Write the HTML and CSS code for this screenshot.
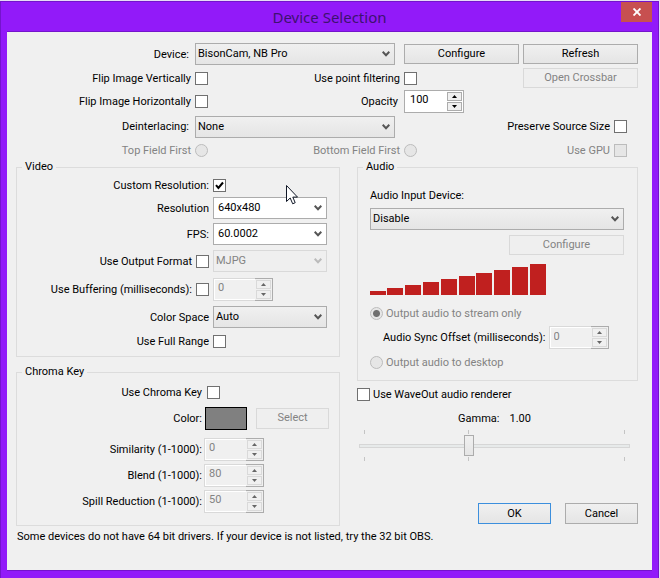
FILE: index.html
```
<!DOCTYPE html>
<html lang="en">
<head>
  <meta charset="UTF-8">
  <meta name="viewport" content="width=device-width, initial-scale=1.0">
  <title>Device Selection</title>
  <link rel="stylesheet" href="styles.css">
</head>
<body>
  <div class="window">
    <header class="titlebar">
      <h1>Device Selection</h1>
      <button class="close" aria-label="Close">
        <svg width="8" height="8" viewBox="0 0 8 8"><path d="M0.5 0.5L7.5 7.5M7.5 0.5L0.5 7.5" stroke="#fff" stroke-width="1.9"/></svg>
      </button>
    </header>

    <form class="dialog">
      <div class="device">
        <label class="colon" for="device">Device:</label>
        <select id="device"><option>BisonCam, NB Pro</option></select>
        <button type="button">Configure</button>
        <button type="button">Refresh</button>

        <label for="flipV">Flip Image Vertically</label>
        <div class="pair">
          <input type="checkbox" id="flipV">
          <label for="pointFilter">Use point filtering</label>
        </div>
        <input type="checkbox" id="pointFilter">
        <button type="button" disabled>Open Crossbar</button>

        <label for="flipH">Flip Image Horizontally</label>
        <div class="pair">
          <input type="checkbox" id="flipH">
          <label class="colon" for="opacity">Opacity</label>
        </div>
        <div class="spinner">
          <input type="text" id="opacity" value="100">
          <div class="arrows">
            <button type="button" class="up" aria-label="Increase opacity"></button>
            <button type="button" class="down" aria-label="Decrease opacity"></button>
          </div>
        </div>
        <span></span>

        <label class="colon" for="deinterlacing">Deinterlacing:</label>
        <select id="deinterlacing"><option>None</option></select>
        <div class="trailing">
          <label for="preserve">Preserve Source Size</label>
          <input type="checkbox" id="preserve">
        </div>

        <label class="off" for="topField">Top Field First</label>
        <div class="pair">
          <input type="radio" name="field" id="topField" disabled>
          <label class="off" for="bottomField">Bottom Field First</label>
        </div>
        <input type="radio" name="field" id="bottomField" disabled>
        <div class="trailing narrow">
          <label class="off" for="gpu">Use GPU</label>
          <input type="checkbox" id="gpu" disabled>
        </div>
      </div>

      <div class="columns">
        <div class="left">
          <fieldset class="video">
            <legend>Video</legend>
            <div class="row short">
              <label for="customRes">Custom Resolution:</label>
              <input type="checkbox" id="customRes" checked>
            </div>
            <div class="row">
              <label for="resolution">Resolution</label>
              <select class="combo" id="resolution"><option>640x480</option></select>
            </div>
            <div class="row">
              <label for="fps">FPS:</label>
              <select class="combo" id="fps"><option>60.0002</option></select>
            </div>
            <div class="row tall">
              <div class="check">
                <label for="useFormat">Use Output Format</label>
                <input type="checkbox" id="useFormat">
              </div>
              <select aria-label="Output format" disabled><option>MJPG</option></select>
            </div>
            <div class="row tall">
              <div class="check">
                <label for="useBuffering">Use Buffering (milliseconds):</label>
                <input type="checkbox" id="useBuffering">
              </div>
              <div class="spinner">
                <input type="text" aria-label="Buffering" value="0" disabled>
                <div class="arrows">
                  <button type="button" class="up" aria-label="Increase buffering" disabled></button>
                  <button type="button" class="down" aria-label="Decrease buffering" disabled></button>
                </div>
              </div>
            </div>
            <div class="row tall">
              <label for="colorSpace">Color Space</label>
              <select id="colorSpace"><option>Auto</option></select>
            </div>
            <div class="row short">
              <label for="fullRange">Use Full Range</label>
              <input type="checkbox" id="fullRange">
            </div>
          </fieldset>

          <fieldset class="chroma">
            <legend>Chroma Key</legend>
            <div class="row">
              <label for="useChroma">Use Chroma Key</label>
              <input class="inset" type="checkbox" id="useChroma">
            </div>
            <div class="row">
              <label for="keyColor">Color:</label>
              <div class="color">
                <button type="button" class="swatch" id="keyColor" aria-label="Key color"></button>
                <button type="button" class="small" disabled>Select</button>
              </div>
            </div>
            <div class="levels">
              <div class="row">
                <label for="similarity">Similarity (1-1000):</label>
                <div class="spinner">
                  <input type="text" id="similarity" value="0" disabled>
                  <div class="arrows">
                    <button type="button" class="up" aria-label="Increase similarity" disabled></button>
                    <button type="button" class="down" aria-label="Decrease similarity" disabled></button>
                  </div>
                </div>
              </div>
              <div class="row">
                <label for="blend">Blend (1-1000):</label>
                <div class="spinner">
                  <input type="text" id="blend" value="80" disabled>
                  <div class="arrows">
                    <button type="button" class="up" aria-label="Increase blend" disabled></button>
                    <button type="button" class="down" aria-label="Decrease blend" disabled></button>
                  </div>
                </div>
              </div>
              <div class="row">
                <label for="spill">Spill Reduction (1-1000):</label>
                <div class="spinner">
                  <input type="text" id="spill" value="50" disabled>
                  <div class="arrows">
                    <button type="button" class="up" aria-label="Increase spill reduction" disabled></button>
                    <button type="button" class="down" aria-label="Decrease spill reduction" disabled></button>
                  </div>
                </div>
              </div>
            </div>
          </fieldset>
        </div>

        <div class="right">
          <fieldset class="audio">
            <legend>Audio</legend>
            <label class="heading" for="audioDevice">Audio Input Device:</label>
            <select id="audioDevice"><option>Disable</option></select>
            <button type="button" class="configure" disabled>Configure</button>
            <svg class="volume" width="178" height="31" viewBox="0 0 178 31" fill="#c0201f" shape-rendering="crispEdges">
              <rect x="0" y="27" width="16" height="4"/>
              <rect x="17" y="24" width="16" height="7"/>
              <rect x="35" y="21" width="16" height="10"/>
              <rect x="53" y="18" width="16" height="13"/>
              <rect x="71" y="15" width="16" height="16"/>
              <rect x="89" y="12" width="16" height="19"/>
              <rect x="106" y="9" width="16" height="22"/>
              <rect x="124" y="6" width="16" height="25"/>
              <rect x="142" y="3" width="16" height="28"/>
              <rect x="160" y="0" width="16" height="31"/>
            </svg>
            <div class="option">
              <input type="radio" name="output" id="streamOnly" checked disabled>
              <label class="off" for="streamOnly">Output audio to stream only</label>
            </div>
            <div class="option offset">
              <label for="syncOffset">Audio Sync Offset (milliseconds):</label>
              <div class="spinner">
                <input type="text" id="syncOffset" value="0" disabled>
                <div class="arrows">
                  <button type="button" class="up" aria-label="Increase offset" disabled></button>
                  <button type="button" class="down" aria-label="Decrease offset" disabled></button>
                </div>
              </div>
            </div>
            <div class="option">
              <input type="radio" name="output" id="desktop" disabled>
              <label class="off" for="desktop">Output audio to desktop</label>
            </div>
          </fieldset>

          <div class="option waveout">
            <input type="checkbox" id="waveOut">
            <label for="waveOut">Use WaveOut audio renderer</label>
          </div>
          <div class="gamma">
            <div class="reading">
              <label for="gamma">Gamma:</label>
              <output for="gamma">1.00</output>
            </div>
            <div class="ticks"><span></span><span></span></div>
            <input type="range" id="gamma" min="0" max="100" value="40">
            <div class="ticks"><span></span><span></span></div>
          </div>
          <div class="actions">
            <button class="small primary">OK</button>
            <button type="button" class="small">Cancel</button>
          </div>
        </div>
      </div>

      <p class="note">Some devices do not have 64 bit drivers. If your device is not listed, try the 32 bit OBS.</p>
    </form>

    <svg class="cursor" width="12" height="20" viewBox="0 0 12 20">
      <path d="M0.5 0.5V16.5L4.2 13L6.7 18.8L9.2 17.7L6.8 12.1H11.5Z" fill="#fff" stroke="#111827" stroke-width="1"/>
    </svg>
  </div>
</body>
</html>
```
FILE: styles.css
```
* {
  box-sizing: border-box;
}
body {
  margin: 0;
  padding: 1px 1px 0 0;
  background: #e6dcf6;
  color: #000;
  font: 11px/14px Roboto, "Liberation Sans", sans-serif;
}
.window {
  position: relative;
  padding: 0 6px 7px;
  background: #921af9;
  border: 1px solid #7414cc;
}
.titlebar {
  display: grid;
  grid-template-columns: 1fr auto 1fr;
  align-items: start;
  height: 29px;
}
h1 {
  grid-column: 2;
  margin: 0;
  font: 15px/30px "Noto Sans", sans-serif;
  color: #3d1270;
}
.close {
  display: flex;
  align-items: center;
  justify-content: center;
  justify-self: end;
  width: 31px;
  height: 20px;
  padding: 0;
  background: #c75050;
  border: none;
}
.dialog {
  padding: 10px 14px 26px 9px;
  background: #f0f0f0;
  border: 1px solid #7414cc;
  border-width: 1px 0;
}

/* controls */
input, select, button {
  margin: 0;
  font: inherit;
  color: inherit;
}
label {
  padding-top: 1px;
  white-space: nowrap;
}
.off {
  color: #838383;
}
button {
  height: 20px;
  padding: 0;
  background: linear-gradient(#f0f0f0, #e5e5e5);
  border: 1px solid #acacac;
}
button:disabled {
  color: #838383;
  background: #efefef;
  border-color: #d9d9d9;
}
.small {
  width: 73px;
  height: 21px;
}
.primary {
  border-color: #3c8fdd;
}
select {
  appearance: none;
  width: 100%;
  height: 22px;
  padding: 0 20px 0 2px;
  background: url("data:image/svg+xml,%3Csvg xmlns='http://www.w3.org/2000/svg' width='8' height='6'%3E%3Cpath d='M.7 .8L4 4.2L7.3 .8' fill='none' stroke='%23555' stroke-width='2'/%3E%3C/svg%3E") no-repeat right 4px center, linear-gradient(#f0f0f0, #e5e5e5);
  border: 1px solid #acacac;
  border-radius: 0;
}
.combo {
  padding: 0 20px 0 4px;
  background: url("data:image/svg+xml,%3Csvg xmlns='http://www.w3.org/2000/svg' width='8' height='6'%3E%3Cpath d='M.7 .8L4 4.2L7.3 .8' fill='none' stroke='%23555' stroke-width='2'/%3E%3C/svg%3E") no-repeat right 4px center #fff;
}
select:disabled {
  color: #838383;
  opacity: 1;
  background: url("data:image/svg+xml,%3Csvg xmlns='http://www.w3.org/2000/svg' width='8' height='6'%3E%3Cpath d='M.7 .8L4 4.2L7.3 .8' fill='none' stroke='%23bbb' stroke-width='2'/%3E%3C/svg%3E") no-repeat right 4px center #efefef;
  border-color: #d9d9d9;
}
input[type="checkbox"], input[type="radio"] {
  appearance: none;
  flex: none;
  width: 13px;
  height: 13px;
  background: #fff;
  border: 1px solid #707070;
}
input[type="radio"] {
  border-radius: 50%;
}
input[type="checkbox"]:disabled, input[type="radio"]:disabled {
  background: #e6e6e6;
  border-color: #bcbcbc;
}
input[type="checkbox"]:checked {
  background: url("data:image/svg+xml,%3Csvg xmlns='http://www.w3.org/2000/svg' width='11' height='11'%3E%3Cpath d='M2 5.2L4.4 8L9 2.5' fill='none' stroke='%23000' stroke-width='2'/%3E%3C/svg%3E") #fff;
}
input[type="radio"]:checked:disabled {
  background: radial-gradient(circle, #707070 3px, #e6e6e6 4px);
}
.spinner {
  display: flex;
  width: 60px;
  height: 23px;
  background: #fff;
  border: 1px solid #acacac;
}
.spinner input {
  flex: 1;
  min-width: 0;
  padding: 0 0 2px 5px;
  background: #fff;
  border: none;
}
.spinner input:disabled {
  margin: -1px 0 -1px -1px;
  padding-left: 4px;
  color: #838383;
  background: #f0f0f0;
  border: 1px solid #d9d9d9;
  border-right: none;
  box-shadow: inset 1px 1px #fff, inset 0 -1px #fff;
}
.spinner:has(input:disabled) {
  background: #f0f0f0;
}
.arrows {
  display: grid;
  gap: 1px;
  width: 17px;
  padding: 1px;
}
.arrows button {
  height: 9px;
  background: url("data:image/svg+xml,%3Csvg xmlns='http://www.w3.org/2000/svg' width='5' height='3'%3E%3Cpath d='M0 3L2.5 0L5 3Z'/%3E%3C/svg%3E") no-repeat center, #f0f0f0;
}
.arrows .down {
  background-image: url("data:image/svg+xml,%3Csvg xmlns='http://www.w3.org/2000/svg' width='5' height='3'%3E%3Cpath d='M0 0L2.5 3L5 0Z'/%3E%3C/svg%3E");
}
.arrows button:disabled {
  background-image: url("data:image/svg+xml,%3Csvg xmlns='http://www.w3.org/2000/svg' width='5' height='3'%3E%3Cpath d='M0 3L2.5 0L5 3Z' fill='%23666'/%3E%3C/svg%3E");
}
.arrows .down:disabled {
  background-image: url("data:image/svg+xml,%3Csvg xmlns='http://www.w3.org/2000/svg' width='5' height='3'%3E%3Cpath d='M0 0L2.5 3L5 0Z' fill='%23666'/%3E%3C/svg%3E");
}

/* device section */
.device {
  display: grid;
  grid-template-columns: 175px 1fr 115px 115px;
  grid-template-rows: 24px 24px 22px 29px 19px;
  column-gap: 4px;
  align-items: center;
}
.device > label {
  text-align: right;
}
.device > select {
  width: calc(100% - 5px);
}
.device .colon {
  padding-right: 2px;
}
.pair {
  display: flex;
  align-items: center;
  justify-content: space-between;
}
.trailing {
  grid-column: 3 / 5;
  display: flex;
  align-items: center;
  justify-content: flex-end;
  gap: 4px;
  padding-right: 11px;
}
.trailing.narrow {
  grid-column: 4;
}

/* groups */
.columns {
  display: grid;
  grid-template-columns: 324fr 281fr;
  gap: 17px;
}
fieldset {
  min-width: 0;
  margin: 0;
  padding: 0;
  border: 1px solid #dcdcdc;
}
legend {
  margin-left: 5px;
  padding: 0 3px;
}
.row {
  display: grid;
  grid-template-columns: 192px 1fr;
  column-gap: 4px;
  align-items: center;
  height: 26px;
}
.row > label {
  text-align: right;
}
.row.tall {
  height: 28px;
}
.row.short {
  height: 20px;
}
.check {
  display: flex;
  align-items: center;
  justify-content: flex-end;
  gap: 4px;
}
.video {
  padding: 1px 12px 5px 0;
}
.chroma {
  margin-top: 8px;
  padding: 0 10px 11px 0;
}
.chroma .row {
  grid-template-columns: 185px 1fr;
  column-gap: 2px;
}
.inset {
  margin-left: 3px;
}
.color {
  display: flex;
  align-items: center;
  justify-content: space-between;
}
.swatch {
  width: 42px;
  height: 23px;
  margin-left: 1px;
  background: #808080;
  border-color: #000;
}
.levels {
  margin-top: 5px;
}
.audio {
  display: flex;
  flex-direction: column;
  padding: 0 13px 8px 12px;
}
.audio legend {
  margin-left: -7px;
}
.heading {
  margin: 14px 0 5px;
}
.configure {
  align-self: flex-end;
  width: 115px;
  margin-top: 5px;
}
.volume {
  margin: 9px 0 8px;
}
.option {
  display: flex;
  align-items: center;
  gap: 3px;
  height: 20px;
}
.option.offset {
  height: 29px;
  padding-left: 13px;
}
.waveout {
  margin-top: 3px;
}
.gamma {
  padding: 7px 8px 0 2px;
}
.reading {
  display: flex;
  align-items: flex-end;
  justify-content: center;
  gap: 10px;
  margin-bottom: 4px;
}
.ticks {
  display: grid;
  grid-template-columns: 2fr 3fr;
  height: 4px;
  margin: 0 5px;
}
.ticks span {
  border-left: 1px solid #c4c4c4;
}
.ticks span:last-child {
  border-right: 1px solid #c4c4c4;
}
input[type="range"] {
  appearance: none;
  display: block;
  width: 100%;
  height: 23px;
  background: none;
}
input[type="range"]::-webkit-slider-runnable-track {
  height: 4px;
  background: #e7eaea;
  border: 1px solid #d6d6d6;
}
input[type="range"]::-webkit-slider-thumb {
  appearance: none;
  width: 10px;
  height: 21px;
  margin-top: -10px;
  background: linear-gradient(#f0f0f0, #e5e5e5);
  border: 1px solid #acacac;
}
.actions {
  display: flex;
  justify-content: flex-end;
  gap: 14px;
  margin-top: 42px;
}
.note {
  margin: 4px 0 0 1px;
}

.cursor {
  position: absolute;
  left: 285px;
  top: 183px;
}
```
